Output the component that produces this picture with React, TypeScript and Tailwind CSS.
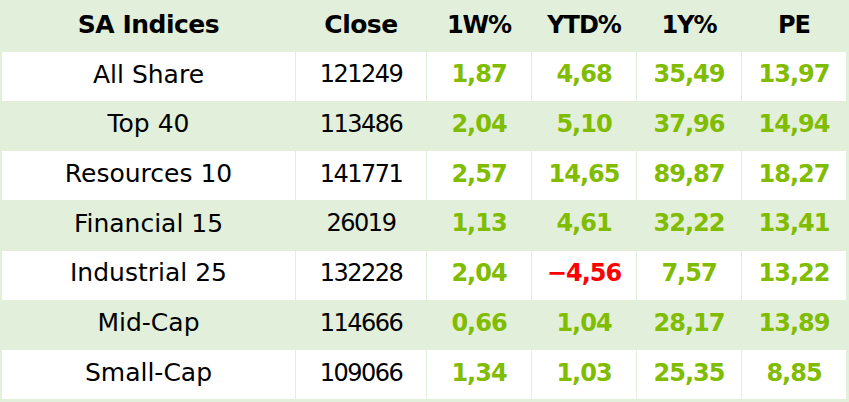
import React from "react";

type Row = {
  name: string;
  close: string;
  w1: string;
  ytd: string;
  y1: string;
  pe: string;
};

const rows: Row[] = [
  { name: "All Share", close: "121249", w1: "1,87", ytd: "4,68", y1: "35,49", pe: "13,97" },
  { name: "Top 40", close: "113486", w1: "2,04", ytd: "5,10", y1: "37,96", pe: "14,94" },
  { name: "Resources 10", close: "141771", w1: "2,57", ytd: "14,65", y1: "89,87", pe: "18,27" },
  { name: "Financial 15", close: "26019", w1: "1,13", ytd: "4,61", y1: "32,22", pe: "13,41" },
  { name: "Industrial 25", close: "132228", w1: "2,04", ytd: "-4,56", y1: "7,57", pe: "13,22" },
  { name: "Mid-Cap", close: "114666", w1: "0,66", ytd: "1,04", y1: "28,17", pe: "13,89" },
  { name: "Small-Cap", close: "109066", w1: "1,34", ytd: "1,03", y1: "25,35", pe: "8,85" },
];

const headers = ["SA Indices", "Close", "1W%", "YTD%", "1Y%", "PE"];

// negative numbers go red, everything else the green
function numColor(v: string) {
  return v.startsWith("-") ? "text-[#ff0000]" : "text-[#80bc00]";
}

export default function App() {
  return (
    <div
      className="w-[849px] h-[402px] bg-[#e2efda] pl-[2px] pr-[3px] pb-[3px] grid grid-cols-[293px_130px_104px_104px_104px_104px] grid-rows-[51px_repeat(7,1fr)] gap-px"
      style={{ fontFamily: '"DejaVu Sans", "Open Sans", sans-serif' }}
    >
      {headers.map((h, i) => (
        <div
          key={h}
          className={`flex items-center justify-center pb-[2px] font-bold text-black ${
            i < 2 ? "text-[25px] tracking-[-0.5px]" : "text-[24px] tracking-[-1px]"
          }`}
        >
          {h}
        </div>
      ))}
      {rows.map((r, i) => {
        const bg = i % 2 === 0 ? "bg-white" : "bg-[#e2efda]";
        return (
          <React.Fragment key={r.name}>
            <div className={`${bg} flex items-center justify-center pb-[4px] text-[25px] text-black`}>
              {r.name}
            </div>
            <div className={`${bg} flex items-center justify-center pb-[4px] text-[24px] tracking-[-1.5px] text-black`}>
              {r.close}
            </div>
            {[r.w1, r.ytd, r.y1, r.pe].map((v, j) => (
              <div
                key={j}
                className={`${bg} flex items-center justify-center pb-[4px] text-[24px] tracking-[-1px] font-bold ${numColor(v)}`}
              >
                {v.replace("-", "−")}
              </div>
            ))}
          </React.Fragment>
        );
      })}
    </div>
  );
}
